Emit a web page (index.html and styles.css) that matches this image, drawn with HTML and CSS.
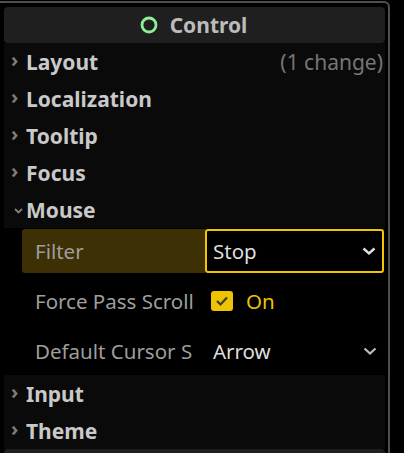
FILE: index.html
```html
<!DOCTYPE html>
<html lang="en">
<head>
    <meta charset="UTF-8">
    <meta name="viewport" content="width=device-width, initial-scale=1.0">
    <title>Inspector</title>
    <link rel="stylesheet" href="styles.css">
</head>
<body>
<div class="inspector">
    <!-- Class header -->
    <div class="class-header">
        <svg class="node-icon" width="18" height="18" viewBox="0 0 18 18">
            <circle cx="9" cy="9" r="7" fill="none" stroke="#8eef97" stroke-width="2.8"/>
        </svg>
        <span>Control</span>
    </div>

    <div class="group">
        <div class="section">
            <span class="arrow">&#8250;</span><span class="title">Layout</span>
            <span class="changes">(1 change)</span>
        </div>
        <div class="section"><span class="arrow">&#8250;</span><span class="title">Localization</span></div>
        <div class="section"><span class="arrow">&#8250;</span><span class="title">Tooltip</span></div>
        <div class="section"><span class="arrow">&#8250;</span><span class="title">Focus</span></div>
        <div class="section">
            <svg class="arrow-down" width="10" height="8" viewBox="0 0 10 8"><path d="M1.5 2 L5 5.5 L8.5 2" fill="none" stroke="#7d7d7d" stroke-width="1.8"/></svg>
            <span class="title">Mouse</span>
        </div>
    </div>

    <!-- Mouse properties -->
    <div class="props">
        <div class="prop selected">
            <div class="prop-label">Filter</div>
            <div class="prop-value">
                <span>Stop</span>
                <svg width="16" height="10" viewBox="0 0 16 10"><path d="M2.5 2.5 L8 7.5 L13.5 2.5" fill="none" stroke="#e0e0e0" stroke-width="2.4"/></svg>
            </div>
        </div>
        <div class="prop">
            <div class="prop-label">Force Pass Scroll</div>
            <div class="prop-value check">
                <span class="checkbox">
                    <svg width="14" height="12" viewBox="0 0 14 12"><path d="M2 6 L5.5 9.5 L12 2.5" fill="none" stroke="#3a3a3a" stroke-width="2.2"/></svg>
                </span>
                <span class="on">On</span>
            </div>
        </div>
        <div class="prop">
            <div class="prop-label">Default Cursor S</div>
            <div class="prop-value">
                <span>Arrow</span>
                <svg width="16" height="10" viewBox="0 0 16 10"><path d="M2.5 2.5 L8 7.5 L13.5 2.5" fill="none" stroke="#bdbdbd" stroke-width="2.2"/></svg>
            </div>
        </div>
    </div>

    <div class="group">
        <div class="section"><span class="arrow">&#8250;</span><span class="title">Input</span></div>
        <div class="section"><span class="arrow">&#8250;</span><span class="title">Theme</span></div>
    </div>

    <div class="class-header next"></div>
</div>
</body>
</html>
```

FILE: styles.css
```css
body {
    margin: 0;
    background-color: #000;
    font-family: "Noto Sans", "Open Sans", sans-serif;
    overflow: hidden;
}

.inspector {
    width: 390px;
    height: 452px;
    margin-top: 1px;
    padding: 4px 3px 0 4px;
    border-top: 2px solid #4f4f4f;
    border-right: 2px solid #4f4f4f;
    border-top-right-radius: 6px;
    box-sizing: border-box;
    overflow: hidden;
}

.class-header {
    height: 36px;
    background-color: #1f1f1f;
    border-radius: 4px;
    display: flex;
    align-items: center;
    justify-content: center;
    gap: 12px;
    color: #bcbcbc;
    font-weight: bold;
    font-size: 21px;
}

.node-icon {
    margin-left: -2px;
}

.group {
    background-color: #0a0a0a;
}

.section {
    height: 37px;
    display: flex;
    align-items: center;
    padding-left: 7px;
    padding-right: 2px;
    color: #c9c9c9;
}

.arrow {
    width: 15px;
    color: #7d7d7d;
    font-size: 20px;
    font-weight: bold;
    line-height: 1;
    margin-top: -3px;
}

.arrow-down {
    width: 15px;
    margin-top: 2px;
}

.title {
    font-weight: bold;
    font-size: 21px;
}

.changes {
    margin-left: auto;
    color: #767676;
    font-size: 21px;
}

.props {
    background-color: #000;
    padding: 1px 1px 2px 18px;
    display: flex;
    flex-direction: column;
    gap: 6px;
}

.prop {
    height: 44px;
    display: flex;
    align-items: stretch;
    font-size: 20.5px;
}

.prop-label {
    width: 183px;
    flex-shrink: 0;
    box-sizing: border-box;
    padding-left: 13px;
    display: flex;
    align-items: center;
    color: #9e9e9e;
    border-radius: 3px 0 0 3px;
    white-space: nowrap;
    overflow: hidden;
}

.prop.selected .prop-label {
    background-color: #3c3004;
}

.prop-value {
    flex: 1;
    display: flex;
    align-items: center;
    justify-content: space-between;
    padding: 0 6px 0 8px;
    color: #dedede;
}

.prop.selected .prop-value {
    border: 2px solid #f2c500;
    border-radius: 3px;
    padding: 0 5px 0 6px;
}

.prop-value.check {
    justify-content: flex-start;
    padding-left: 6px;
}

.checkbox {
    width: 22px;
    height: 20px;
    background-color: #eec400;
    border-radius: 3px;
    display: flex;
    align-items: center;
    justify-content: center;
}

.on {
    color: #eec400;
    margin-left: 13px;
}
```
